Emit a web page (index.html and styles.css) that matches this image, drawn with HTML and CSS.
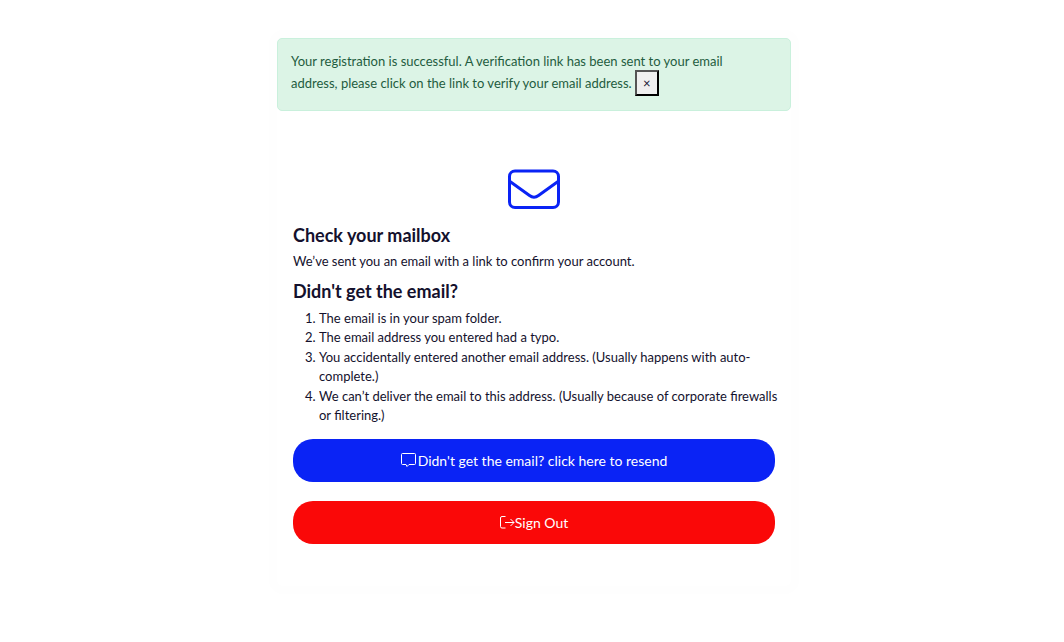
FILE: index.html
```html
<!DOCTYPE html>
<html lang="en">
<head>
<meta charset="utf-8">
<meta name="viewport" content="width=device-width, initial-scale=1">
<title>Verify your email</title>
<link rel="stylesheet" href="styles.css">
</head>
<body>
<main class="card">
  <div class="alert" role="alert">
    Your registration is successful. A verification link has been sent to your email address, please click on the link to verify your email address.
    <button type="button" class="alert-close" aria-label="Close">×</button>
  </div>
  <div class="content">
    <svg class="mail-icon" viewBox="0 0 52 40" fill="none" stroke="currentColor" stroke-width="3" aria-hidden="true">
      <rect x="1.5" y="2" width="49" height="36.500" rx="5.500"/>
      <path d="M2 12.500L21.500 26.500Q26 30 30.500 26.500L50 12.500" stroke-linejoin="round"/>
    </svg>
    <h1 class="title">Check your mailbox</h1>
    <p class="text">We’ve sent you an email with a link to confirm your account.</p>
    <h2 class="title">Didn't get the email?</h2>
    <ol class="reasons">
      <li>The email is in your spam folder.</li>
      <li>The email address you entered had a typo.</li>
      <li>You accidentally entered another email address. (Usually happens with auto-complete.)</li>
      <li>We can’t deliver the email to this address. (Usually because of corporate firewalls or filtering.)</li>
    </ol>
    <div class="actions">
      <button type="button" class="btn btn-primary"><svg class="btn-icon btn-icon-spaced" viewBox="0 0 15 15" fill="none" stroke="currentColor" aria-hidden="true"><path d="M1.500.500h12q1 0 1 1v9q0 1-1 1H8L6 13.500 5 11.500H1.500q-1 0-1-1v-9q0-1 1-1z"/></svg>Didn't get the email? click here to resend</button>
      <button type="button" class="btn btn-danger"><svg class="btn-icon" viewBox="0 0 15 15" fill="none" stroke="currentColor" aria-hidden="true"><path d="M5.500 1.500H2Q.500 1.500.500 3v8.500Q.500 13 2 13h3.500M5 7.500h9M10.500 4l3.500 3.500-3.500 3.500"/></svg>Sign Out</button>
    </div>
  </div>
</main>
</body>
</html>
```
FILE: styles.css
```css
* {
  box-sizing: border-box;
}

body {
  margin: 0;
  padding: 38px 16px 38px 20px;
  background: #fff;
  color: #14112d;
  font: 13px/1.5 Lato, "Open Sans", sans-serif;
}

.card {
  max-width: 514px;
  margin: 0 auto;
  padding-bottom: 42px;
  border-radius: 6px;
  background: #fff;
  box-shadow: 0 0 0 8px #fefefe;
}

.alert {
  padding: 11px 39px 16px 13px;
  border: 1px solid #c9f0dc;
  border-radius: 5px;
  background: #dcf4e6;
  color: #1f5c40;
  line-height: 22px;
}

.alert-close {
  margin: -4px 0;
  padding: 1px 6px;
  border: 2px outset #000;
  border-radius: 0;
  background: #efefef;
  color: #14112d;
  font: inherit;
  line-height: 20px;
}

.content {
  padding: 58px 16px 0;
}

.mail-icon {
  display: block;
  width: 52px;
  height: 40px;
  margin: 0 auto 14px;
  color: #0a23f5;
}

.title {
  margin: 0 0 5px;
  font-size: 18px;
  font-weight: 700;
  line-height: 24px;
}

.text {
  margin: 0 0 7px;
}

.reasons {
  margin: 6px -8px 13px 0;
  padding-left: 26px;
}

.actions {
  display: grid;
  gap: 19px;
}

.btn {
  display: flex;
  align-items: center;
  justify-content: center;
  padding: 11px 16px;
  border: 0;
  border-radius: 20px;
  color: #fff;
  font: 14px/21px Lato, "Open Sans", sans-serif;
}

.btn-primary {
  background: #0a23f5;
}

.btn-danger {
  background: #fa0808;
}

.btn-icon {
  width: 15px;
  height: 15px;
}

.btn-icon-spaced {
  margin-right: 2px;
}
```
